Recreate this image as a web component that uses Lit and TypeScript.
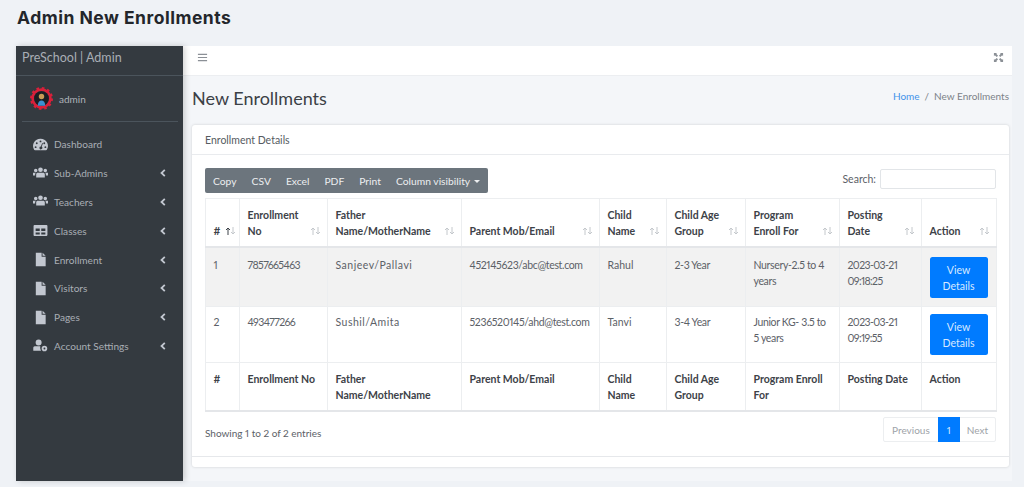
import { LitElement, html, css, svg } from 'lit';
import { customElement } from 'lit/decorators.js';

const file = svg`<path d="M3 .8h6.200v4.200h4.300v10.200H3zM10.200 .8l3.300 3.200h-3.300z"/>`;
const icons: Record<string, unknown> = {
  gauge: svg`<path fill-rule="evenodd" d="M8 1.800a7.800 7.800 0 0 0-6.800 11.800c.2.300.5.500.9.500h11.800c.4 0 .7-.2.900-.5A7.800 7.800 0 0 0 8 1.800zM8 3.700a1 1 0 1 1 0 2 1 1 0 0 1 0-2zM4 5.700a1 1 0 1 1 0 2 1 1 0 0 1 0-2zM12 5.700a1 1 0 1 1 0 2 1 1 0 0 1 0-2zM2.800 9.800a1 1 0 1 1 0 2 1 1 0 0 1 0-2zM13.200 9.800a1 1 0 1 1 0 2 1 1 0 0 1 0-2zM9.800 6.400l.8.3-1.300 3.800a1.500 1.500 0 1 1-.9-.3z"/>`,
  users: svg`<path d="M8 1.500a2.500 2.500 0 1 1 0 5 2.500 2.500 0 0 1 0-5zM2.900 2.800a1.900 1.900 0 1 1 0 3.800 1.900 1.900 0 0 1 0-3.800zM13.100 2.800a1.900 1.900 0 1 1 0 3.800 1.900 1.900 0 0 1 0-3.800zM5 7.300h6c.9 0 1.600.7 1.600 1.600v3.300H3.400V8.900c0-.9.700-1.600 1.600-1.600zM0 7.300h2.900c-.3.4-.6 1-.6 1.600v1.300H0zM16 7.300h-2.900c.3.4.6 1 .6 1.600v1.300H16z"/>`,
  table: svg`<path fill-rule="evenodd" d="M1.500 2.200h13c.5 0 .9.400.9.900v9.800c0 .5-.4.900-.9.900h-13a.9.900 0 0 1-.9-.9V3.100c0-.5.4-.9.900-.9zM2.800 5.800v2.800h4.400V5.800zM8.800 5.800v2.800h4.400V5.800zM2.800 10v2.300h4.400V10zM8.800 10v2.300h4.400V10z"/>`,
  file,
  cog: svg`<path fill-rule="evenodd" d="M6 1.500a3.200 3.200 0 1 1 0 6.400 3.200 3.200 0 0 1 0-6.400zM1.800 8.800h6c-.3 1.400-.1 3.200.8 4.700H.3v-2.900c0-1 .6-1.800 1.500-1.800zM12.200 8.200a3 3 0 1 1 0 6 3 3 0 0 1 0-6zM12.200 10.200a1 1 0 1 0 0 2 1 1 0 0 0 0-2z"/>`,
};

const menu = [
  { label: 'Dashboard', icon: 'gauge', arrow: false },
  { label: 'Sub-Admins', icon: 'users', arrow: true },
  { label: 'Teachers', icon: 'users', arrow: true },
  { label: 'Classes', icon: 'table', arrow: true },
  { label: 'Enrollment', icon: 'file', arrow: true },
  { label: 'Visitors', icon: 'file', arrow: true },
  { label: 'Pages', icon: 'file', arrow: true },
  { label: 'Account Settings', icon: 'cog', arrow: true },
];

const cols = [34, 88, 134, 138, 67, 79, 94, 82, 75];
const heads = ['#', 'Enrollment No', 'Father Name/MotherName', 'Parent Mob/Email', 'Child Name', 'Child Age Group', 'Program Enroll For', 'Posting Date', 'Action'];
// Lato has wider digits and narrower letters than the original font, so each column is nudged
const fit = ['', 'digits', 'wide', 'mixed', '', 'mixed', 'mixed', 'digits'];
const rows = [
  ['1', '7857665463', 'Sanjeev/Pallavi', '452145623/abc@test.com', 'Rahul', '2-3 Year', 'Nursery-2.5 to 4 years', '2023-03-21 09:18:25'],
  ['2', '493477266', 'Sushil/Amita', '5236520145/ahd@test.com', 'Tanvi', '3-4 Year', 'Junior KG- 3.5 to 5 years', '2023-03-21 09:19:55'],
];

@customElement('app-root')
export class AppRoot extends LitElement {
  static styles = css`
    :host {
      display: block;
      width: 1024px;
      height: 487px;
      overflow: hidden;
      background: #eff2f6;
      font-family: 'Lato', 'Liberation Sans', sans-serif;
      font-feature-settings: 'pnum';
      font-size: 10.5px;
      line-height: 16px;
      color: #5c6167;
    }
    h1 {
      margin: 0;
      height: 46px;
      padding: 8px 0 0 17px;
      box-sizing: border-box;
      font-family: 'Inter', sans-serif;
      font-size: 17.500px;
      letter-spacing: 0.5px;
      line-height: 20px;
      font-weight: 700;
      color: #23262b;
    }
    .shell {
      display: flex;
      margin-left: 16px;
      width: 996px;
      height: 435px;
    }
    .side {
      width: 167px;
      flex: none;
      background: #343a40;
      color: #c2c7d0;
      box-shadow: 2px 0 6px rgba(0, 0, 0, 0.18);
      z-index: 1;
    }
    .brand {
      height: 30px;
      padding-left: 6px;
      font-size: 12.500px;
      line-height: 23px;
      color: #a9aeb5;
      border-bottom: 1px solid #4b545c;
      box-sizing: border-box;
    }
    .user {
      display: flex;
      align-items: center;
      gap: 6px;
      height: 46px;
      margin: 0 5px 0 6px;
      padding-left: 8px;
      border-bottom: 1px solid #4b545c;
      box-sizing: border-box;
      font-size: 10px;
      color: #aeb3ba;
    }
    .nav {
      display: flex;
      flex-direction: column;
      padding-top: 8px;
      font-size: 10.100px;
    }
    .item {
      display: flex;
      align-items: center;
      height: 28.800px;
      padding-left: 17px;
      color: #a9aeb5;
    }
    .item svg.ic {
      width: 15px;
      height: 15px;
      fill: #c2c7d0;
      margin-right: 6px;
      flex: none;
    }
    .item span { flex: 1; }
    .item svg.chev {
      width: 6px;
      height: 8px;
      fill: none;
      stroke: #c2c7d0;
      stroke-width: 1.800;
      margin-right: 17px;
    }
    .main {
      flex: 1;
      background: #f4f6f9;
      display: flex;
      flex-direction: column;
      min-width: 0;
    }
    .top {
      height: 30px;
      background: #fff;
      flex: none;
      display: flex;
      align-items: center;
      justify-content: space-between;
      padding: 0 8px 7px 14px;
      border-bottom: 1px solid #eceef1;
      box-sizing: border-box;
    }
    .top svg { width: 11px; height: 11px; fill: #8b9096; display: block; }
    .head {
      display: flex;
      justify-content: space-between;
      align-items: center;
      height: 49px;
      padding: 0 3px 6px 9px;
      box-sizing: border-box;
      flex: none;
    }
    .head h2 {
      margin: 0;
      font-size: 18px;
      font-weight: 400;
      color: #3b4046;
    }
    .crumb { font-size: 10px; color: #7c8288; margin-bottom: 4px; }
    .crumb a { color: #3f93ea; }
    .crumb i { font-style: normal; margin: 0 5px; }
    .card {
      margin-left: 9px;
      width: 817px;
      height: 342px;
      background: #fff;
      border-radius: 3px;
      box-shadow: 0 0 3px rgba(0, 0, 0, 0.16);
      box-sizing: border-box;
      flex: none;
    }
    .card-head {
      height: 30px;
      padding: 0 13px;
      display: flex;
      align-items: center;
      border-bottom: 1px solid #e9ebee;
      box-sizing: border-box;
      color: #565b61;
    }
    .card-body {
      height: 302px;
      padding: 13px 13px 0;
      box-sizing: border-box;
      border-bottom: 1px solid #e6e8eb;
    }
    .tools {
      display: flex;
      justify-content: space-between;
      height: 30px;
    }
    .btns {
      display: flex;
      align-items: center;
      height: 25px;
      padding: 0 8px;
      gap: 15px;
      background: #6c757d;
      color: #eceef0;
      border-radius: 2px;
      font-size: 10.300px;
    }
    .caret {
      display: inline-block;
      margin-left: 4px;
      vertical-align: 2px;
      border: 3.500px solid transparent;
      border-top-color: #eceef0;
      border-bottom: 0;
    }
    .search { display: flex; gap: 4px; height: 21px; align-items: center; }
    .search div {
      width: 116px;
      height: 20px;
      border: 1px solid #e2e5e8;
      border-radius: 2px;
      box-sizing: border-box;
    }
    table {
      border-collapse: collapse;
      table-layout: fixed;
      width: 791px;
    }
    th, td {
      border: 1px solid #eceef0;
      padding: 8px 7.500px;
      text-align: left;
      vertical-align: top;
      box-sizing: border-box;
    }
    th { color: #3d4248; font-weight: 700; }
    thead th {
      height: 48px;
      vertical-align: bottom;
      border-bottom: 2px solid #e4e6e9;
      padding-bottom: 7px;
      padding-right: 22px;
      position: relative;
    }
    thead th:first-child { padding-right: 8px; }
    tfoot th { height: 49px; padding-bottom: 4px; border-bottom: 2px solid #e4e6e9; }
    tbody tr { height: 56px; }
    tbody td { padding-top: 7px; padding-bottom: 4px; }
    tbody tr:first-child { height: 59px; background: #f2f2f2; }
    tbody tr:first-child td { padding-top: 9px; }
    td.act { padding-top: 6px; padding-bottom: 0; }
    tbody tr:first-child td.act { padding-top: 8px; }
    td.digits { letter-spacing: -0.6px; }
    td.mixed { letter-spacing: -0.35px; }
    td.wide { letter-spacing: 0.5px; }
    .sort {
      position: absolute;
      right: 6px;
      bottom: 11px;
      width: 11px;
      height: 8px;
      fill: none;
      stroke: #c4c8cc;
      stroke-width: 1;
    }
    thead th:first-child .sort { right: 3px; }
    .sort .on { stroke: #3d4248; }
    .view {
      display: block;
      width: 58px;
      height: 41px;
      margin-top: 1px;
      padding: 5px 8px 0;
      background: #007bff;
      color: #d7e9ff;
      border-radius: 2.500px;
      text-align: center;
      box-sizing: border-box;
    }
    .foot {
      display: flex;
      justify-content: space-between;
      align-items: flex-start;
      margin-top: 5px;
      font-size: 10px;
    }
    .info { margin-top: 8px; }
    .pages {
      display: flex;
      height: 25px;
      border: 1px solid #eceef0;
      border-radius: 2px;
      box-sizing: border-box;
      color: #9ea3a8;
      align-items: stretch;
    }
    .pages span { display: flex; align-items: center; padding: 0 8px; }
    .pages span:last-child { padding: 0 7px; }
    .pages .cur {
      width: 22px;
      padding: 0;
      justify-content: center;
      background: #007bff;
      color: #d7e9ff;
      margin: -1px 0;
    }
  `;

  private renderSort(first: boolean) {
    return html`<svg class="sort" viewBox="0 0 11 8">
      <path class=${first ? 'on' : ''} d="M3 8V1M1 3l2-2 2 2"/>
      <path d="M8 0v7M6 5l2 2 2-2"/>
    </svg>`;
  }

  render() {
    return html`
      <h1>Admin New Enrollments</h1>
      <div class="shell">
        <aside class="side">
          <div class="brand">PreSchool | Admin</div>
          <div class="user">
            <svg width="23" height="23" viewBox="0 0 22 22">
              <circle cx="11" cy="11" r="8.500" fill="none" stroke="#d8203a" stroke-width="2.500"/>
              <circle cx="11" cy="11" r="10" fill="none" stroke="#d8203a" stroke-width="2" stroke-dasharray="2.500 2.740"/>
              <circle cx="11" cy="11" r="7" fill="#1b1d22"/>
              <circle cx="11" cy="9" r="2.600" fill="#c99a55"/>
              <path d="M7.500 18c0-3.500 1.500-5 3.500-5s3.500 1.500 3.500 5z" fill="#3c8fd0"/>
            </svg>
            admin
          </div>
          <nav class="nav">
            ${menu.map(
              (m) => html`<div class="item">
                <svg class="ic" viewBox="0 0 16 16">${icons[m.icon]}</svg>
                <span>${m.label}</span>
                ${m.arrow ? html`<svg class="chev" viewBox="0 0 6 8"><path d="M4.800 .8 1.500 4l3.300 3.200"/></svg>` : ''}
              </div>`,
            )}
          </nav>
        </aside>
        <div class="main">
          <div class="top">
            <svg viewBox="0 0 12 12"><path d="M1 2h10v1.200H1zM1 5.400h10v1.200H1zM1 8.800h10V10H1z"/></svg>
            <svg viewBox="0 0 12 12"><path d="M1 1h3.500L3.500 2 5.500 4 4 5.500 2 3.500 1 4.500zM11 1v3.500L10 3.500 8 5.500 6.500 4l2-2-1-1zM1 11V7.500l1 1 2-2L5.500 8l-2 2 1 1zM11 11H7.500l1-1-2-2L8 6.500l2 2 1-1z"/></svg>
          </div>
          <div class="head">
            <h2>New Enrollments</h2>
            <div class="crumb"><a>Home</a><i>/</i>New Enrollments</div>
          </div>
          <section class="card">
            <div class="card-head">Enrollment Details</div>
            <div class="card-body">
              <div class="tools">
                <div class="btns">
                  <span>Copy</span><span>CSV</span><span>Excel</span><span>PDF</span><span>Print</span>
                  <span>Column visibility<i class="caret"></i></span>
                </div>
                <div class="search">Search: <div></div></div>
              </div>
              <table>
                <colgroup>${cols.map((w) => html`<col style="width:${w}px" />`)}</colgroup>
                <thead>
                  <tr>${heads.map((h, i) => html`<th>${h}${this.renderSort(i === 0)}</th>`)}</tr>
                </thead>
                <tbody>
                  ${rows.map(
                    (r) => html`<tr>
                      ${r.map((c, i) => html`<td class=${fit[i]}>${c}</td>`)}
                      <td class="act"><a class="view">View Details</a></td>
                    </tr>`,
                  )}
                </tbody>
                <tfoot>
                  <tr>${heads.map((h) => html`<th>${h}</th>`)}</tr>
                </tfoot>
              </table>
              <div class="foot">
                <div class="info">Showing 1 to 2 of 2 entries</div>
                <div class="pages">
                  <span>Previous</span><span class="cur">1</span><span>Next</span>
                </div>
              </div>
            </div>
          </section>
        </div>
      </div>
    `;
  }
}
